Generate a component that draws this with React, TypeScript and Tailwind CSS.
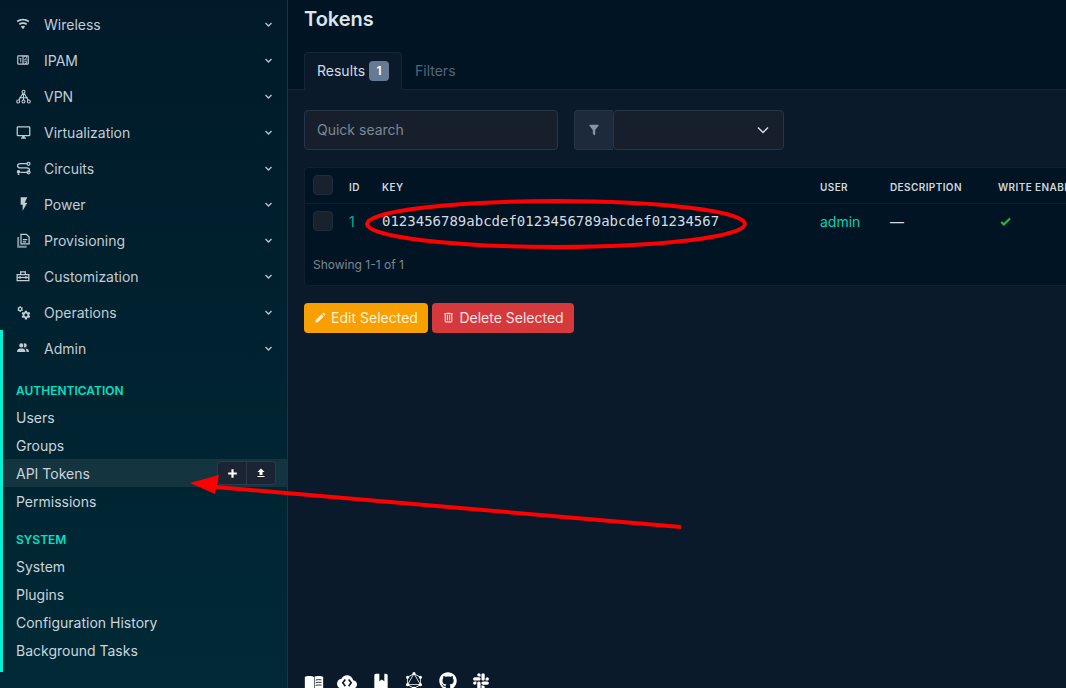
import React from "react";
import { FaGithub, FaSlack } from "react-icons/fa";
import { SiGraphql } from "react-icons/si";

const P = ({ d, size = 14, className = "" }: { d: string; size?: number; className?: string }) => (
  <svg width={size} height={size} viewBox="0 0 24 24" fill="currentColor" className={className}>
    <path d={d} />
  </svg>
);

const wifi = "M12,21L15.6,16.2C14.6,15.45 13.35,15 12,15C10.65,15 9.4,15.45 8.4,16.2L12,21M12,3C7.95,3 4.21,4.34 1.2,6.6L3,9C5.5,7.12 8.62,6 12,6C15.38,6 18.5,7.12 21,9L22.8,6.6C19.79,4.34 16.05,3 12,3M12,9C9.3,9 6.81,9.89 4.8,11.4L6.6,13.8C8.1,12.67 9.97,12 12,12C14.03,12 15.9,12.67 17.4,13.8L19.2,11.4C17.19,9.89 14.7,9 12,9Z";
const counter = "M4,4H20A2,2 0 0,1 22,6V18A2,2 0 0,1 20,20H4A2,2 0 0,1 2,18V6A2,2 0 0,1 4,4M4,6V18H11V6H4M20,18V6H18.76C19,6.54 18.95,7.07 18.95,7.13C18.88,7.8 18.41,8.5 18.24,8.75L15.91,11.3L19.23,11.28L19.24,12.5L14.04,12.47L14,11.47C14,11.47 17.05,8.24 17.2,7.95C17.34,7.67 17.91,6 16.5,6C15.27,6.05 15.41,7.3 15.41,7.3L13.87,7.31C13.87,7.31 13.88,6.65 14.25,6H13V18H15.58L15.57,17.14L16.54,17.13C16.54,17.13 17.45,16.97 17.46,16.08C17.5,15.08 16.65,15.08 16.5,15.08C16.37,15.08 15.43,15.13 15.43,15.95H13.91C13.91,15.95 13.95,13.89 16.5,13.89C19.1,13.89 18.96,15.91 18.96,15.91C18.96,15.91 19,17.16 17.85,17.63L18.37,18H20M8.92,16H7.42V10.2L5.62,10.76V9.53L8.76,8.41H8.92V16Z";
const monitor = "M21,16H3V4H21M21,2H3C1.89,2 1,2.89 1,4V16A2,2 0 0,0 3,18H10V20H8V22H16V20H14V18H21A2,2 0 0,0 23,16V4C23,2.89 22.1,2 21,2Z";
const flash = "M7,2V13H10V22L17,10H13L17,2H7Z";
const people = "M16 17V19H2V17S2 13 9 13 16 17 16 17M12.5 7.5A3.5 3.5 0 1 0 9 11A3.5 3.5 0 0 0 12.5 7.5M15.94 13A5.32 5.32 0 0 1 18 17V19H22V17S22 13.37 15.94 13M15 4A3.39 3.39 0 0 0 13.07 4.59A5 5 0 0 1 13.07 10.41A3.39 3.39 0 0 0 15 11A3.5 3.5 0 0 0 15 4Z";
const cogs = "M15.9,18.45C17.25,18.45 18.35,17.35 18.35,16C18.35,14.65 17.25,13.55 15.9,13.55C14.54,13.55 13.45,14.65 13.45,16C13.45,17.35 14.54,18.45 15.9,18.45M21.1,16.68L22.58,17.84C22.71,17.95 22.75,18.13 22.66,18.29L21.26,20.71C21.17,20.86 21,20.92 20.83,20.86L19.09,20.16C18.73,20.44 18.33,20.67 17.91,20.85L17.64,22.7C17.62,22.87 17.47,23 17.3,23H14.5C14.32,23 14.18,22.87 14.15,22.7L13.89,20.85C13.46,20.67 13.07,20.44 12.71,20.16L10.96,20.86C10.81,20.92 10.62,20.86 10.54,20.71L9.14,18.29C9.05,18.13 9.09,17.95 9.22,17.84L10.7,16.68L10.65,16L10.7,15.31L9.22,14.16C9.09,14.05 9.05,13.86 9.14,13.71L10.54,11.29C10.62,11.13 10.81,11.07 10.96,11.13L12.71,11.84C13.07,11.56 13.46,11.32 13.89,11.15L14.15,9.29C14.18,9.13 14.32,9 14.5,9H17.3C17.47,9 17.62,9.13 17.64,9.29L17.91,11.15C18.33,11.32 18.73,11.56 19.09,11.84L20.83,11.13C21,11.07 21.17,11.13 21.26,11.29L22.66,13.71C22.75,13.86 22.71,14.05 22.58,14.16L21.1,15.31L21.15,16L21.1,16.68 M6.69,8.07C7.56,8.07 8.26,7.37 8.26,6.5C8.26,5.63 7.56,4.92 6.69,4.92A1.58,1.58 0 0,0 5.11,6.5C5.11,7.37 5.82,8.07 6.69,8.07M10.03,6.94L11,7.68C11.07,7.75 11.09,7.87 11.03,7.97L10.13,9.53C10.08,9.63 9.96,9.67 9.86,9.63L8.74,9.18L8,9.62L7.81,10.81C7.79,10.92 7.7,11 7.59,11H5.79C5.67,11 5.58,10.92 5.56,10.81L5.4,9.62L4.64,9.18L3.5,9.63C3.41,9.67 3.3,9.63 3.24,9.53L2.34,7.97C2.28,7.87 2.31,7.75 2.39,7.68L3.34,6.94L3.31,6.5L3.34,6.06L2.39,5.32C2.31,5.25 2.28,5.13 2.34,5.03L3.24,3.47C3.3,3.37 3.41,3.33 3.5,3.37L4.63,3.82L5.4,3.38L5.56,2.19C5.58,2.08 5.67,2 5.79,2H7.59C7.7,2 7.79,2.08 7.81,2.19L8,3.38L8.74,3.82L9.86,3.37C9.96,3.33 10.08,3.37 10.13,3.47L11.03,5.03C11.09,5.13 11.07,5.25 11,5.32L10.03,6.06L10.06,6.5L10.03,6.94Z";

const Vpn = () => (
  <svg width={15} height={15} viewBox="0 0 24 24" fill="none" stroke="currentColor" strokeWidth={1.7}>
    <circle cx="12" cy="4.5" r="2.4" />
    <circle cx="3.5" cy="20" r="2.4" />
    <circle cx="12" cy="20" r="2.4" />
    <circle cx="20.5" cy="20" r="2.4" />
    <path d="M11 6.8L4.6 17.8M12 7V17.5M13 6.8L19.4 17.8M5 14H19" />
  </svg>
);
const Transit = () => (
  <svg width={15} height={15} viewBox="0 0 24 24" fill="none" stroke="currentColor" strokeWidth={2}>
    <path d="M18 4H7C4 4 2.5 5.5 2.5 7.5S4 11 7 11H17C20 11 21.5 12.5 21.5 14.5S20 18 17 18H7" />
    <circle cx="20" cy="4.5" r="2.4" />
    <circle cx="4" cy="17" r="2.8" fill="currentColor" stroke="none" />
    <circle cx="4" cy="21" r="1.5" fill="currentColor" stroke="none" />
    <circle cx="20" cy="18" r="2.4" />
  </svg>
);
const Docs = () => (
  <svg width={15} height={15} viewBox="0 0 24 24" fill="none" stroke="currentColor" strokeWidth={2}>
    <path d="M8 2H16.5L21 6.5V17.5H8Z" />
    <path d="M3.5 6.5V22H17" strokeWidth={3} opacity={0.7} />
    <path d="M11 10.5H18M11 14H16" />
  </svg>
);
const Toolbox = () => (
  <svg width={14} height={14} viewBox="0 0 24 24" fill="none" stroke="currentColor" strokeWidth={2.2}>
    <path d="M2 9.5H22V20H2Z" />
    <path d="M8 9.5V5H16V9.5" />
    <path d="M2 14.5H22" />
    <path d="M7 12.5V16.5M17 12.5V16.5" />
  </svg>
);

const navItems: [string, React.ReactNode][] = [
  ["Wireless", <P d={wifi} />],
  ["IPAM", <P d={counter} />],
  ["VPN", <Vpn />],
  ["Virtualization", <P d={monitor} size={15} />],
  ["Circuits", <Transit />],
  ["Power", <P d={flash} size={16} />],
  ["Provisioning", <Docs />],
  ["Customization", <Toolbox />],
  ["Operations", <P d={cogs} size={15} />],
];

const Chevron = () => (
  <svg width={9} height={9} viewBox="0 0 12 12" fill="none" stroke="currentColor" strokeWidth={1.8} className="text-[#b8c4cf]">
    <path d="M2 4L6 8L10 4" />
  </svg>
);

const NavRow = ({ label, icon, inset }: { label: string; icon: React.ReactNode; inset?: boolean }) => (
  <div className={`flex h-9 items-center pr-[14px] text-[14px] text-[#c3ccd6] ${inset ? "pl-[13px]" : "pl-[16px]"}`}>
    <span className="flex w-[28px] shrink-0 items-center text-[#c3ccd6]">{icon}</span>
    <span className="flex-1">{label}</span>
    <Chevron />
  </div>
);

const SubLink = ({ label, active }: { label: string; active?: boolean }) => (
  <div className={`relative flex h-7 items-center pl-[13px] text-[14px] text-[#ccd5de] ${active ? "bg-[#14343f]" : ""}`}>
    {label}
    {active && (
      <div className="absolute right-[11px] top-[2px] flex h-[24px] w-[59px] rounded-[4px] border border-[#2b3a4c] bg-[#1a2433]">
        <span className="flex flex-1 items-center justify-center border-r border-[#2b394b] text-white">
          <P d="M20 14H14V20H10V14H4V10H10V4H14V10H20V14Z" size={13} />
        </span>
        <span className="flex flex-1 items-center justify-center text-white">
          <P d="M9,16V10H5L12,3L19,10H15V16H9M5,20V18H19V20H5Z" size={12} />
        </span>
      </div>
    )}
  </div>
);

const SectionLabel = ({ label }: { label: string }) => (
  <div className="pl-[13px] text-[12px] font-semibold leading-[18px] text-[#00e0c4]">{label}</div>
);

const Box = () => <div className="h-5 w-5 rounded-[4px] border border-[#1f2c3d] bg-[#18212e]" />;

const th = "px-0 pt-[4px] text-left text-[10px] font-semibold tracking-[0.4px] text-[#d0d6de]";

export default function App() {
  return (
    <div className="relative flex h-[688px] w-[1066px] overflow-hidden font-['Inter',sans-serif] text-[14px]">
      <aside className="flex w-[288px] shrink-0 flex-col border-r border-[#1e3346] bg-gradient-to-b from-[#001a29] to-[#002a36] pt-[6px]">
        {navItems.map(([l, i]) => (
          <NavRow key={l} label={l} icon={i} />
        ))}
        <div className="border-l-[3px] border-[#00f2d4] pb-[8px]">
          <NavRow label="Admin" icon={<P d={people} />} inset />
          <div className="-ml-[3px] pl-[3px]">
            <div className="mt-[16px]"><SectionLabel label="AUTHENTICATION" /></div>
            <div className="mt-[3px]">
              <SubLink label="Users" />
              <SubLink label="Groups" />
              <SubLink label="API Tokens" active />
              <SubLink label="Permissions" />
            </div>
            <div className="mt-[16px]"><SectionLabel label="SYSTEM" /></div>
            <div className="mt-[3px]">
              <SubLink label="System" />
              <SubLink label="Plugins" />
              <SubLink label="Configuration History" />
              <SubLink label="Background Tasks" />
            </div>
          </div>
        </div>
      </aside>

      <main className="flex min-w-0 flex-1 flex-col bg-[#0a1a2a]">
        <div className="h-[90px] shrink-0 border-b border-[#14273a] bg-[#001423] pl-[16px]">
          <h1 className="pt-[7px] text-[20px] font-semibold leading-[24px] text-[#dfe4ea]">Tokens</h1>
          <div className="mt-[21px] flex h-[38px] items-stretch text-[14px]">
            <div className="flex h-[38px] w-[98px] items-center gap-[4px] rounded-t-[4px] border border-b-0 border-[#14273a] bg-[#0a1a2a] pb-[2px] pl-[12px] text-[#d5dbe3]">
              Results
              <span className="flex h-[20px] w-[20px] items-center justify-center rounded-[4px] bg-[#667a94] text-[12px] font-semibold text-white">1</span>
            </div>
            <div className="flex items-center pb-[2px] pl-[13px] text-[#556577]">Filters</div>
          </div>
        </div>

        <div className="mt-[20px] flex h-[40px] shrink-0 pl-[16px]">
          <div className="flex h-[40px] w-[254px] items-center rounded-[4px] border border-[#26364a] bg-[#171f2c] pb-[2px] pl-[12px] text-[#7d8896]">Quick search</div>
          <div className="ml-[16px] flex h-[40px] w-[210px]">
            <div className="flex w-[39px] items-center justify-center rounded-l-[4px] border border-r-0 border-[#26364a] bg-[#1d2a3c] text-[#8593a4]">
              <P d="M14,12V19.88C14.04,20.18 13.94,20.5 13.71,20.71C13.32,21.1 12.69,21.1 12.3,20.71L10.29,18.7C10.06,18.47 9.96,18.16 10,17.87V12H9.97L4.21,4.62C3.87,4.19 3.95,3.56 4.38,3.22C4.57,3.08 4.78,3 5,3H19C19.22,3 19.43,3.08 19.62,3.22C20.05,3.56 20.13,4.19 19.79,4.62L14.03,12H14Z" size={14} />
            </div>
            <div className="flex flex-1 items-center justify-end rounded-[4px] border border-[#26364a] bg-[#171f2c] pr-[14px] text-[#d5dbe3]">
              <svg width={12} height={12} viewBox="0 0 12 12" fill="none" stroke="currentColor" strokeWidth={1.5}><path d="M1 3.5L6 8.5L11 3.5" /></svg>
            </div>
          </div>
        </div>

        <div className="ml-[16px] mt-[17px] h-[119px] w-[800px] shrink-0 rounded-l-[4px] border border-r-0 border-[#10202f] bg-[#001423]">
          <table className="w-[800px] table-fixed border-collapse">
            <colgroup>
              <col className="w-[44px]" />
              <col className="w-[33px]" />
              <col className="w-[438px]" />
              <col className="w-[70px]" />
              <col className="w-[108px]" />
              <col />
            </colgroup>
            <thead>
              <tr className="h-[35px] border-b border-[#10202f]">
                <th className="pl-[8px] text-left"><Box /></th>
                <th className={th}>ID</th>
                <th className={th}>KEY</th>
                <th className={th}>USER</th>
                <th className={th}>DESCRIPTION</th>
                <th className={`${th} whitespace-nowrap`}>WRITE ENABLED</th>
              </tr>
            </thead>
            <tbody>
              <tr className="h-[36px] text-[14px]">
                <td className="pl-[8px]"><Box /></td>
                <td className="text-[#00b096]">1</td>
                <td className="font-['DejaVu_Sans_Mono',monospace] text-[14px] text-[#d5dbe3]">0123456789abcdef0123456789abcdef01234567</td>
                <td className="text-[#00d4b8]">admin</td>
                <td className="text-[#d5dbe3]">—</td>
                <td className="pl-[1px] text-[#2fb344]">
                  <P d="M9,20.42L2.79,14.21L5.62,11.38L9,14.77L18.88,4.88L21.71,7.71L9,20.42Z" size={13} />
                </td>
              </tr>
            </tbody>
          </table>
          <div className="pl-[8px] pt-[17px] text-[12px] leading-[18px] text-[#7d8896]">Showing 1-1 of 1</div>
        </div>

        <div className="ml-[16px] mt-[17px] flex shrink-0 gap-[4px] text-[14px]">
          <div className="flex h-[30px] w-[124px] items-center justify-center gap-[4px] rounded-[4px] bg-[#f7a000] pb-[2px] text-[#fff2dc]">
            <P d="M20.71,7.04C21.1,6.65 21.1,6 20.71,5.63L18.37,3.29C18,2.9 17.35,2.9 16.96,3.29L15.12,5.12L18.87,8.87M3,17.25V21H6.75L17.81,9.93L14.06,6.18L3,17.25Z" size={13} />
            Edit Selected
          </div>
          <div className="flex h-[30px] w-[142px] items-center justify-center gap-[4px] rounded-[4px] bg-[#d6393b] pb-[2px] text-[#fbe4e4]">
            <P d="M9,3V4H4V6H5V19A2,2 0 0,0 7,21H17A2,2 0 0,0 19,19V6H20V4H15V3H9M7,6H17V19H7V6M9,8V17H11V8H9M13,8V17H15V8H13Z" size={13} />
            Delete Selected
          </div>
        </div>

        <div className="ml-[16px] mt-auto flex h-[16px] shrink-0 items-start gap-[13.4px] text-white">
          <span className="flex w-5 justify-center">
            <svg width={21} height={21} viewBox="0 0 24 24">
              <path d="M1 5.5C3 4.2 9 3.6 12 5.6C15 3.6 21 4.2 23 5.5V21C21 19.8 15 19.4 12 21.2C9 19.4 3 19.8 1 21Z" fill="currentColor" />
              <path d="M14 9.2C16 8.4 19 8.4 21 8.9M14 12.4C16 11.6 19 11.6 21 12.1M14 15.6C16 14.8 19 14.8 21 15.3" fill="none" stroke="#0a1a2a" strokeWidth={1.1} />
              <path d="M12.6 5.6V21" stroke="#0a1a2a" strokeWidth={0.8} />
            </svg>
          </span>
          <span className="flex w-5 justify-center">
            <svg width={20} height={20} viewBox="0 0 24 24" fill="currentColor">
              <path d="M19.35 10.04C18.67 6.59 15.64 4 12 4 9.11 4 6.6 5.64 5.35 8.04 2.34 8.36 0 10.91 0 14c0 3.31 2.69 6 6 6h13c2.76 0 5-2.24 5-5 0-2.64-2.05-4.78-4.65-4.96z" />
              <path d="M10 9L7 13L10 17M14 9L17 13L14 17" fill="none" stroke="#0a1a2a" strokeWidth={2} />
            </svg>
          </span>
          <span className="flex w-5 justify-center">
            <P d="M6 2H10V11L13 9L16 11V2H18C19.1 2 20 2.9 20 4V20C20 21.1 19.1 22 18 22H6C4.9 22 4 21.1 4 20V4C4 2.9 4.9 2 6 2Z" size={20} />
          </span>
          <span className="flex w-5 justify-center"><SiGraphql size={18} /></span>
          <span className="flex w-5 justify-center"><FaGithub size={18} /></span>
          <span className="flex w-5 justify-center"><FaSlack size={18} /></span>
        </div>
      </main>

      <svg className="pointer-events-none absolute left-0 top-0" width={1066} height={688} fill="none">
        <ellipse cx="556" cy="224" rx="189" ry="23" stroke="#ff0000" strokeWidth="4" />
        <path d="M681 527L215 487" stroke="#ff0000" strokeWidth="4" />
        <path d="M190 483L219 475L215 494Z" fill="#ff0000" />
      </svg>
    </div>
  );
}
